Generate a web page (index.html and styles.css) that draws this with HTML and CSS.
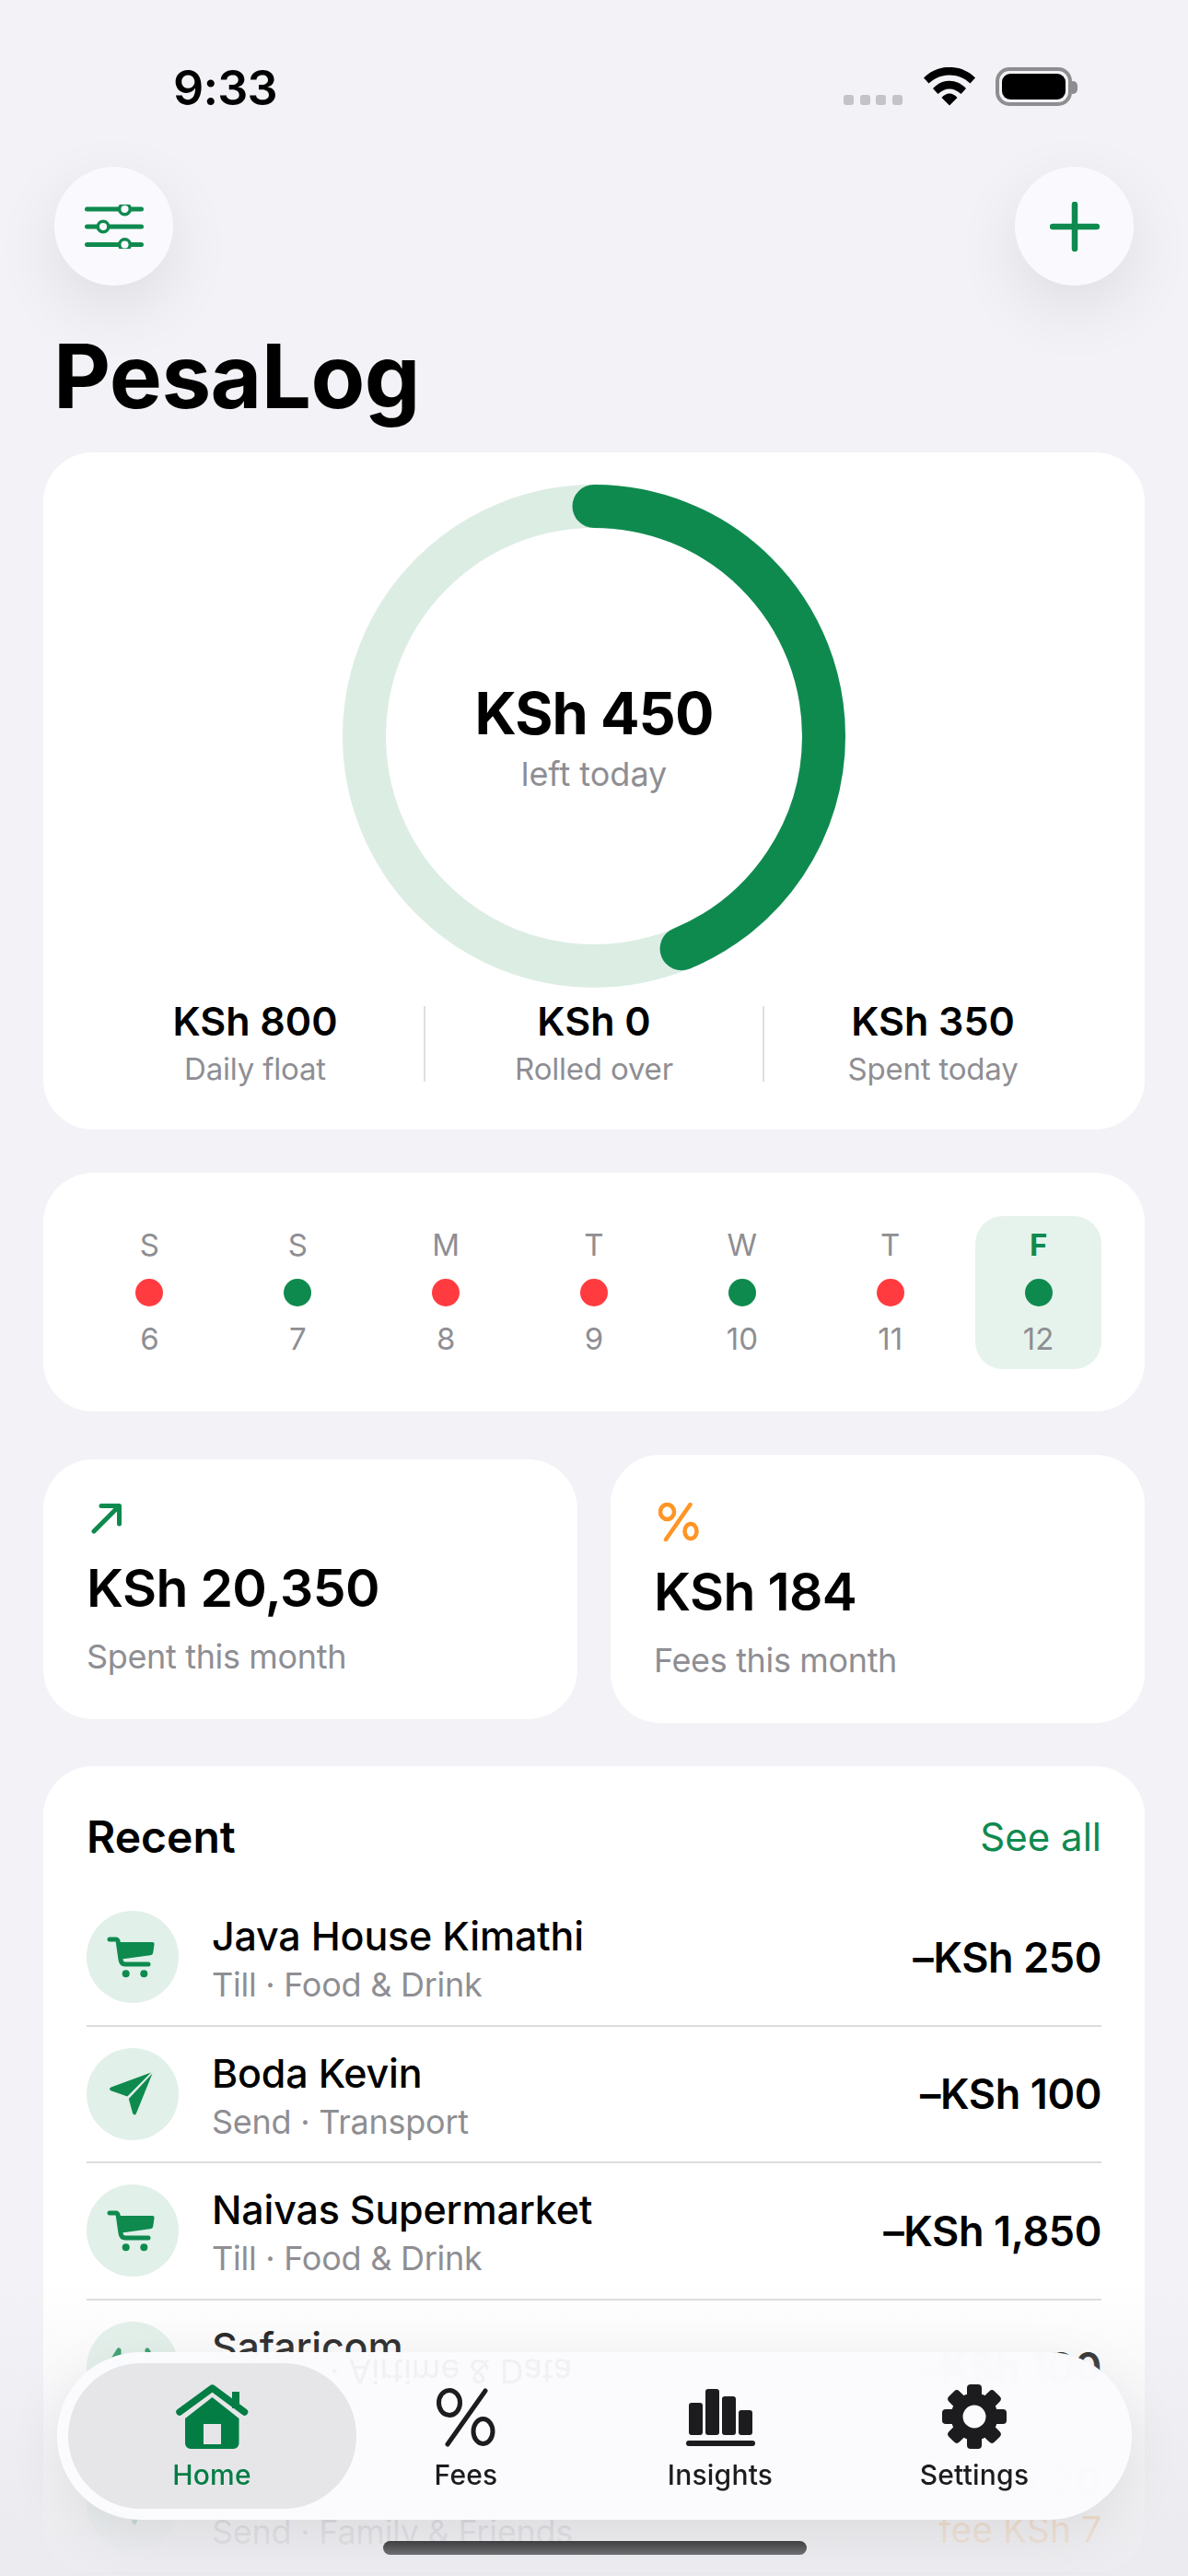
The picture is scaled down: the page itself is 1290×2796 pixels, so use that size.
FILE: index.html
```html
<!DOCTYPE html>
<html lang="en">
<head>
<meta charset="utf-8">
<title>PesaLog</title>
<link rel="stylesheet" href="styles.css">
</head>
<body>
<svg class="defs" width="0" height="0" aria-hidden="true">
  <defs>
    <symbol id="cart" viewBox="0 0 100 100">
      <path class="cart-line" d="M25 31H31.5C33 31 34 32 34.2 33.5L37 53C37.4 56.5 39 58 42 58H67"/>
      <path class="g-fill" d="M35 34H71.5C73 34 73.7 35 73.5 36.5L72.3 45C72 47 71 48 69 48.3L38 52.5Z"/>
      <circle class="g-fill" cx="42.7" cy="68.3" r="4"/>
      <circle class="g-fill" cx="62.3" cy="68.3" r="4"/>
    </symbol>
    <symbol id="plane" viewBox="0 0 100 100">
      <path class="g-fill" d="M70 26.5L26.5 42.5C24.5 43.5 24.5 45.5 26.5 46.3L44.3 52.5Z"/>
      <path class="g-fill" d="M71.5 27.5L45.8 55L50 70.5C51 73 53.2 73 54 70.8Z"/>
    </symbol>
    <symbol id="swap" viewBox="0 0 100 100">
      <path class="cart-line" d="M28 42L35 31M66 31L70 38M35 31V70M66 31V70"/>
    </symbol>
  </defs>
</svg>

<div class="status">
  <span class="time">9:33</span>
  <div class="status-icons">
    <div class="signal"><i></i><i></i><i></i><i></i></div>
    <svg class="wifi" width="56" height="42" viewBox="0 0 56 42">
      <path d="M0 11.5C15 -4 41 -4 56 11.5L50.5 17.5C38 5.5 18 5.5 5.5 17.5Z"/>
      <path d="M10 23C20 12 36 12 46 23L40.5 29C33 21.5 23 21.5 15.5 29Z"/>
      <path d="M19.5 33C24.5 27 31.5 27 36.5 33L28 41.5Z"/>
    </svg>
    <div class="battery"><div class="battery-fill"></div><div class="battery-nub"></div></div>
  </div>
</div>

<div class="toolbar">
  <button class="round-btn" aria-label="Filters">
    <svg width="64" height="48" viewBox="0 0 64 48">
      <path class="slider-lines" d="M2.5 5H61.5M2.5 24H61.5M2.5 43.5H61.5"/>
      <circle class="knob" cx="43.5" cy="5" r="5.8"/>
      <circle class="knob" cx="20" cy="24" r="5.8"/>
      <circle class="knob" cx="43.5" cy="43.5" r="5.8"/>
    </svg>
  </button>
  <button class="round-btn" aria-label="Add">
    <svg width="54" height="54" viewBox="0 0 54 54"><path class="plus" d="M27 3V51M3 27H51"/></svg>
  </button>
</div>

<h1 class="title">PesaLog</h1>

<main class="content">
  <section class="card budget">
    <div class="ring">
      <svg width="546" height="546" viewBox="0 0 546 546">
        <circle class="ring-track" cx="273" cy="273" r="249.5"/>
        <circle class="ring-value" cx="273" cy="273" r="249.5" transform="rotate(-90 273 273)"/>
      </svg>
      <div class="ring-text">
        <div class="ring-amount">KSh 450</div>
        <div class="ring-label">left today</div>
      </div>
    </div>
    <div class="metrics">
      <div class="metric"><div class="metric-value">KSh 800</div><div class="metric-label">Daily float</div></div>
      <div class="metric-rule"></div>
      <div class="metric"><div class="metric-value">KSh 0</div><div class="metric-label">Rolled over</div></div>
      <div class="metric-rule"></div>
      <div class="metric"><div class="metric-value">KSh 350</div><div class="metric-label">Spent today</div></div>
    </div>
  </section>

  <section class="card week">
    <div class="day"><span class="day-letter">S</span><i class="dot red"></i><span class="day-num">6</span></div>
    <div class="day"><span class="day-letter">S</span><i class="dot green"></i><span class="day-num">7</span></div>
    <div class="day"><span class="day-letter">M</span><i class="dot red"></i><span class="day-num">8</span></div>
    <div class="day"><span class="day-letter">T</span><i class="dot red"></i><span class="day-num">9</span></div>
    <div class="day"><span class="day-letter">W</span><i class="dot green"></i><span class="day-num">10</span></div>
    <div class="day"><span class="day-letter">T</span><i class="dot red"></i><span class="day-num">11</span></div>
    <div class="day today"><span class="day-letter">F</span><i class="dot green"></i><span class="day-num">12</span></div>
  </section>

  <section class="stats">
    <div class="card stat">
      <div class="stat-icon">
        <svg width="34" height="34" viewBox="0 0 34 34"><path class="arrow" d="M3 31L29 5M11 3.5H30.5V23"/></svg>
      </div>
      <div class="stat-value">KSh 20,350</div>
      <div class="stat-label">Spent this month</div>
    </div>
    <div class="card stat">
      <div class="stat-icon tall">
        <svg class="pct-small" width="44" height="42" viewBox="0 0 44 42">
          <ellipse cx="9.5" cy="10" rx="7.5" ry="8"/>
          <ellipse cx="35" cy="31" rx="6.5" ry="8"/>
          <path d="M34.5 2L8 40"/>
        </svg>
      </div>
      <div class="stat-value">KSh 184</div>
      <div class="stat-label">Fees this month</div>
    </div>
  </section>

  <section class="card recent">
    <div class="recent-head">
      <h2 class="recent-title">Recent</h2>
      <a class="see-all">See all</a>
    </div>
    <div class="tx">
      <div class="tx-icon"><svg width="100" height="100"><use href="#cart"/></svg></div>
      <div class="tx-text"><div class="tx-name">Java House Kimathi</div><div class="tx-sub">Till · Food &amp; Drink</div></div>
      <div class="tx-amount">–KSh 250</div>
    </div>
    <div class="tx">
      <div class="tx-icon"><svg width="100" height="100"><use href="#plane"/></svg></div>
      <div class="tx-text"><div class="tx-name">Boda Kevin</div><div class="tx-sub">Send · Transport</div></div>
      <div class="tx-amount">–KSh 100</div>
    </div>
    <div class="tx">
      <div class="tx-icon"><svg width="100" height="100"><use href="#cart"/></svg></div>
      <div class="tx-text"><div class="tx-name">Naivas Supermarket</div><div class="tx-sub">Till · Food &amp; Drink</div></div>
      <div class="tx-amount">–KSh 1,850</div>
    </div>
    <div class="tx">
      <div class="tx-icon"><svg width="100" height="100"><use href="#swap"/></svg></div>
      <div class="tx-text"><div class="tx-name">Safaricom</div><div class="tx-sub">Paybill · Airtime &amp; Data</div></div>
      <div class="tx-amount">–KSh 100</div>
    </div>
    <div class="tx">
      <div class="tx-icon"><svg width="100" height="100"><use href="#plane"/></svg></div>
      <div class="tx-text"><div class="tx-name">Mum</div><div class="tx-sub">Send · Family &amp; Friends</div></div>
      <div class="tx-amount">–KSh 20<div class="tx-fee">fee KSh 7</div></div>
    </div>
  </section>
</main>

<div class="fade"></div>

<nav class="tabbar">
  <span class="reflection">· Airtime &amp; Data</span>
  <a class="tab active">
    <svg class="tab-icon" width="80" height="70" viewBox="0 0 80 70">
      <path class="home-body" fill-rule="evenodd" d="M40.5 14L69.5 37V64A6 6 0 0 1 63.5 70H17A6 6 0 0 1 11 64V37ZM31 43V65H50V43Z"/>
      <rect class="home-body" x="62" y="8" width="8" height="18"/>
      <path class="home-roof" d="M5 30L40.5 4L75.5 30"/>
    </svg>
    <span class="tab-label">Home</span>
  </a>
  <a class="tab">
    <svg class="tab-icon pct" width="80" height="70" viewBox="0 0 80 70">
      <ellipse cx="22" cy="20" rx="11.5" ry="13.5"/>
      <ellipse cx="58.5" cy="51" rx="10.5" ry="13.5"/>
      <path d="M61 7L20 65"/>
    </svg>
    <span class="tab-label">Fees</span>
  </a>
  <a class="tab">
    <svg class="tab-icon" width="80" height="70" viewBox="0 0 80 70">
      <rect class="ink" x="6" y="20" width="15" height="35" rx="3"/>
      <rect class="ink" x="24" y="5" width="15" height="50" rx="3"/>
      <rect class="ink" x="42" y="13" width="15" height="42" rx="3"/>
      <rect class="ink" x="60" y="28" width="15" height="27" rx="3"/>
      <rect class="ink" x="3" y="61" width="75" height="6" rx="3"/>
    </svg>
    <span class="tab-label">Insights</span>
  </a>
  <a class="tab">
    <svg class="tab-icon" width="80" height="70" viewBox="-40 -35 80 70">
      <circle class="gear-ring" r="19"/>
      <g class="ink">
        <rect x="-8" y="-35" width="16" height="15" rx="4"/>
        <rect x="-8" y="-35" width="16" height="15" rx="4" transform="rotate(45)"/>
        <rect x="-8" y="-35" width="16" height="15" rx="4" transform="rotate(90)"/>
        <rect x="-8" y="-35" width="16" height="15" rx="4" transform="rotate(135)"/>
        <rect x="-8" y="-35" width="16" height="15" rx="4" transform="rotate(180)"/>
        <rect x="-8" y="-35" width="16" height="15" rx="4" transform="rotate(225)"/>
        <rect x="-8" y="-35" width="16" height="15" rx="4" transform="rotate(270)"/>
        <rect x="-8" y="-35" width="16" height="15" rx="4" transform="rotate(315)"/>
      </g>
    </svg>
    <span class="tab-label">Settings</span>
  </a>
</nav>

<div class="home-bar"></div>
</body>
</html>
```

FILE: styles.css
```css
* { box-sizing: border-box; }
html, body { margin: 0; padding: 0; }
body {
  position: relative;
  width: 1290px;
  height: 2796px;
  overflow: hidden;
  background: #f2f2f7;
  font-family: Inter, "Noto Sans", sans-serif;
  color: #000;
}
.defs { position: absolute; }
.g-fill { fill: #0f8a4f; }
.cart-line { fill: none; stroke: #0f8a4f; stroke-width: 5; stroke-linecap: round; stroke-linejoin: round; }

/* status bar */
.status { height: 181px; display: flex; justify-content: space-between; padding: 73px 126px 0 188px; }
.time { font-size: 52px; line-height: 46px; font-weight: 600; letter-spacing: -.8px; }
.status-icons { display: flex; align-items: flex-start; position: relative; }
.signal { display: flex; gap: 6.6px; margin: 30px 23px 0 0; }
.signal i { width: 11px; height: 11px; border-radius: 3px; background: #c3c3c8; }
.wifi { margin-right: 22px; }
.battery { position: relative; width: 83px; height: 42px; border: 4px solid #8e8e91; border-radius: 15px; padding: 3px; }
.battery-fill { width: 100%; height: 100%; background: #000; border-radius: 9px; }
.battery-nub { position: absolute; left: 79px; top: 11px; width: 6px; height: 14px; background: #8e8e91; border-radius: 0 5px 5px 0; }

/* top buttons */
.toolbar { display: flex; justify-content: space-between; padding: 0 59px; }
.round-btn {
  width: 129px; height: 129px; border: 0; border-radius: 50%; padding: 0;
  background: #fafafe;
  display: flex; align-items: center; justify-content: center;
  box-shadow: 0 24px 72px rgba(0, 0, 0, .09);
}
.slider-lines { fill: none; stroke: #0f8a4f; stroke-width: 5; stroke-linecap: round; }
.knob { fill: #fafafe; stroke: #0f8a4f; stroke-width: 3.5; }
.plus { fill: none; stroke: #0f8a4f; stroke-width: 6.5; stroke-linecap: round; }

.title { margin: 0; padding: 48px 0 33px 58px; font-size: 96px; line-height: 100px; font-weight: 700; letter-spacing: -.6px; }

.content { display: flex; flex-direction: column; gap: 47px; padding: 0 47px; }
.card { background: #fff; border-radius: 54px; }

/* budget card */
.budget { padding: 35px 47px 44px; display: flex; flex-direction: column; align-items: center; }
.ring { position: relative; width: 546px; height: 546px; }
.ring svg { display: block; }
.ring-track, .ring-value { fill: none; stroke-width: 47; }
.ring-track { stroke: #dcede4; }
.ring-value { stroke: #0f8a4f; stroke-linecap: round; stroke-dasharray: 686 1568; }
.ring-text { position: absolute; inset: 6px 0 0; display: flex; flex-direction: column; align-items: center; justify-content: center; gap: 6px; }
.ring-amount { font-size: 63px; line-height: 70px; font-weight: 700; letter-spacing: -.9px; }
.ring-label { font-size: 36px; line-height: 50px; color: #8e8e93; }
.metrics { align-self: stretch; display: flex; align-items: center; margin-top: 11px; }
.metric { flex: 1; text-align: center; }
.metric-rule { width: 2px; height: 82px; background: #dfdfe3; }
.metric-value { font-size: 43px; line-height: 50px; font-weight: 600; }
.metric-label { font-size: 33px; line-height: 44px; margin-top: 5px; color: #8e8e93; letter-spacing: -.2px; }

/* week strip */
.week { padding: 47px 47px 46px; display: grid; grid-template-columns: repeat(7, 1fr); column-gap: 24px; }
.day { display: flex; flex-direction: column; align-items: center; padding: 11px 0 13px; border-radius: 30px; color: #8e8e93; }
.day-letter { font-size: 33px; line-height: 40px; }
.day-num { font-size: 33px; line-height: 40px; margin-top: 15px; }
.dot { width: 30px; height: 30px; border-radius: 50%; margin-top: 17px; }
.dot.red { background: #ff3b3f; }
.dot.green { background: #0f8a4f; }
.today { background: #e6f3ec; }
.today .day-letter { color: #0f8a4f; font-weight: 700; }

/* stat cards */
.stats { display: flex; align-items: center; gap: 36px; }
.stat { flex: 1; padding: 47px 47px 43px; }
.stat-icon { height: 40px; margin-bottom: 18px; }
.stat-icon svg { display: block; margin-left: 5px; }
.stat-icon.tall { height: 50px; padding-top: 5px; margin-bottom: 17px; }
.arrow { fill: none; stroke: #0f8a4f; stroke-width: 5; stroke-linecap: round; stroke-linejoin: round; }
.pct-small ellipse, .pct-small path { fill: none; stroke: #ff9524; stroke-width: 4.5; stroke-linecap: round; }
.stat-value { font-size: 57px; line-height: 70px; font-weight: 600; letter-spacing: -.6px; }
.stat-label { font-size: 36px; line-height: 50px; margin-top: 14px; color: #8e8e93; letter-spacing: -.35px; }

/* recent */
.recent { padding: 47px 47px 0; }
.recent-head { display: flex; justify-content: space-between; align-items: center; margin-bottom: 27px; }
.recent-title { margin: 0; font-size: 48px; line-height: 60px; font-weight: 600; }
.see-all { font-size: 42px; line-height: 60px; color: #0f8a4f; }
.tx { height: 148.5px; display: flex; align-items: center; border-bottom: 2px solid #dcdce0; }
.tx-icon { width: 100px; height: 100px; border-radius: 50%; background: #e1f0e8; flex: none; }
.tx-icon svg { display: block; }
.tx-text { flex: 1; margin-left: 36px; padding-top: 4px; }
.tx-name { font-size: 43px; line-height: 56px; font-weight: 500; letter-spacing: -.2px; }
.tx-sub { font-size: 36px; line-height: 50px; color: #8e8e93; letter-spacing: -.25px; }
.tx-amount { font-size: 45px; font-weight: 600; letter-spacing: -.4px; text-align: right; white-space: nowrap; }
.tx-fee { font-size: 39px; line-height: 50px; font-weight: 400; letter-spacing: 0; color: #ff9524; }

/* bottom fade */
.fade {
  position: absolute; left: 0; right: 0; top: 2475px; bottom: 0;
  background: linear-gradient(to bottom, rgba(235,235,239,0) 0%, rgba(235,235,239,.25) 25%, rgba(235,235,239,.87) 85%, rgba(235,235,239,.92) 100%);
}

/* tab bar */
.tabbar {
  position: absolute; left: 62px; top: 2553px; width: 1167px; height: 182px;
  padding: 35px 33px 0 30px;
  display: flex;
  border-radius: 91px;
  background: rgba(251, 251, 254, .985);
  -webkit-backdrop-filter: blur(3px);
  backdrop-filter: blur(3px);
  box-shadow: 0 16px 60px rgba(0, 0, 0, .08);
}
.reflection {
  position: absolute; left: 296px; top: 6px;
  font-size: 36px; line-height: 30px; color: rgba(142, 142, 147, .09);
  transform: scaleY(-1);
  white-space: nowrap;
}
.tab { position: relative; flex: 1; display: flex; flex-direction: column; align-items: center; color: #1c1c1e; }
.tab.active { color: #047d45; }
.tab.active::before {
  content: ""; position: absolute; left: -18px; right: -19px; top: -23px; height: 158px;
  border-radius: 79px; background: rgba(224, 224, 228, .8);
}
.tab-icon { position: relative; display: block; }
.tab-label { position: relative; font-size: 30px; line-height: 44px; margin-top: 6px; font-weight: 500; letter-spacing: .2px; }
.ink { fill: #1c1c1e; }
.gear-ring { fill: none; stroke: #1c1c1e; stroke-width: 13; }
.pct ellipse, .pct path { fill: none; stroke: #1c1c1e; stroke-width: 5; stroke-linecap: round; }
.home-body { fill: #047d45; }
.home-roof { fill: none; stroke: #047d45; stroke-width: 7.5; stroke-linecap: round; stroke-linejoin: round; }

.home-bar {
  position: absolute; left: 416px; top: 2758px; width: 460px; height: 15px; border-radius: 8px;
  background: linear-gradient(to bottom, #3f3f41, #6f6f72);
}
```
